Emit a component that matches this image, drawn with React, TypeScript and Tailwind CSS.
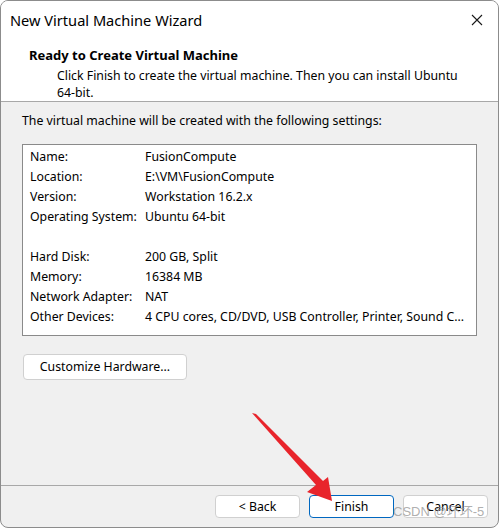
const SETTINGS: [string, string][] = [
  ['Name:', 'FusionCompute'],
  ['Location:', 'E:\\VM\\FusionCompute'],
  ['Version:', 'Workstation 16.2.x'],
  ['Operating System:', 'Ubuntu 64-bit'],
  ['', ''],
  ['Hard Disk:', '200 GB, Split'],
  ['Memory:', '16384 MB'],
  ['Network Adapter:', 'NAT'],
  ['Other Devices:', '4 CPU cores, CD/DVD, USB Controller, Printer, Sound C...'],
]

function DlgButton({ label, primary }: { label: string; primary?: boolean }) {
  return (
    <button
      className={
        primary
          ? 'h-[23px] w-[85px] rounded-[4px] border border-[#0067c0] bg-white text-[12.3px] leading-[16px] text-black'
          : 'h-[23px] w-[85px] rounded-[4px] border border-[#d0d0d0] bg-white text-[12.3px] leading-[16px] text-black'
      }
    >
      {label}
    </button>
  )
}

export default function App() {
  return (
    <div className="relative h-[528px] w-[499px] overflow-hidden bg-white font-['Noto_Sans',Arial,sans-serif] text-black">
      <div className="flex h-full w-full flex-col overflow-hidden rounded-[8px] border border-[#8c8c8c] bg-[#f0f0f0]">
        {/* header */}
        <div className="border-b border-[#a8a8a8] bg-white">
          <div className="flex h-[37px] items-center justify-between pl-[9px] pr-[15px]">
            <span className="text-[14.6px] leading-[18px]">New Virtual Machine Wizard</span>
            <svg width="12" height="12" viewBox="0 0 12 12">
              <path d="M1 1 L11 11 M11 1 L1 11" stroke="#1a1a1a" strokeWidth="1.1" />
            </svg>
          </div>
          <div className="mt-[9px] pl-[28px] text-[13px] font-bold leading-[16px]">
            Ready to Create Virtual Machine
          </div>
          <div className="mt-[4px] pl-[56px] pr-[30px] text-[12.3px] leading-[17px]">
            Click Finish to create the virtual machine. Then you can install Ubuntu
            <br />
            64-bit.
          </div>
        </div>

        {/* body */}
        <div className="flex flex-1 flex-col px-[21px] pt-[11px]">
          <div className="text-[12.3px] leading-[16px]">
            The virtual machine will be created with the following settings:
          </div>
          <div className="mt-[15px] h-[192px] border border-[#8a8a8a] bg-white pl-[7px] pt-[2px]">
            {SETTINGS.map(([k, v], i) => (
              <div key={i} className="flex h-[20px] items-center text-[12.3px] leading-[16px]">
                <span className="w-[115px] shrink-0">{k}</span>
                <span className="whitespace-nowrap">{v}</span>
              </div>
            ))}
          </div>
          <div className="mt-[17px]">
            <button className="ml-[1px] h-[26px] w-[164px] rounded-[4px] border border-[#d0d0d0] bg-white text-[12.3px] leading-[16px]">
              Customize Hardware...
            </button>
          </div>
        </div>

        {/* footer */}
        <div className="flex h-[42px] justify-end gap-[9px] border-t border-[#a8a8a8] pr-[10px] pt-[9px]">
          <DlgButton label="< Back" />
          <DlgButton label="Finish" primary />
          <DlgButton label="Cancel" />
        </div>
      </div>

      {/* annotation arrow */}
      <svg className="pointer-events-none absolute left-0 top-0" width="499" height="528" viewBox="0 0 499 528">
        <polygon
          points="252,413 256,414 323,481 328,477 332,501 307,492 316,485"
          fill="#e8242b"
        />
      </svg>

      {/* watermark */}
      <div className="pointer-events-none absolute left-[393px] top-[502px] font-['Liberation_Sans','Noto_Sans_CJK_SC',sans-serif] text-[13px] text-[#9a9a9a]/80">
        CSDN @坏坏-5
      </div>
    </div>
  )
}
